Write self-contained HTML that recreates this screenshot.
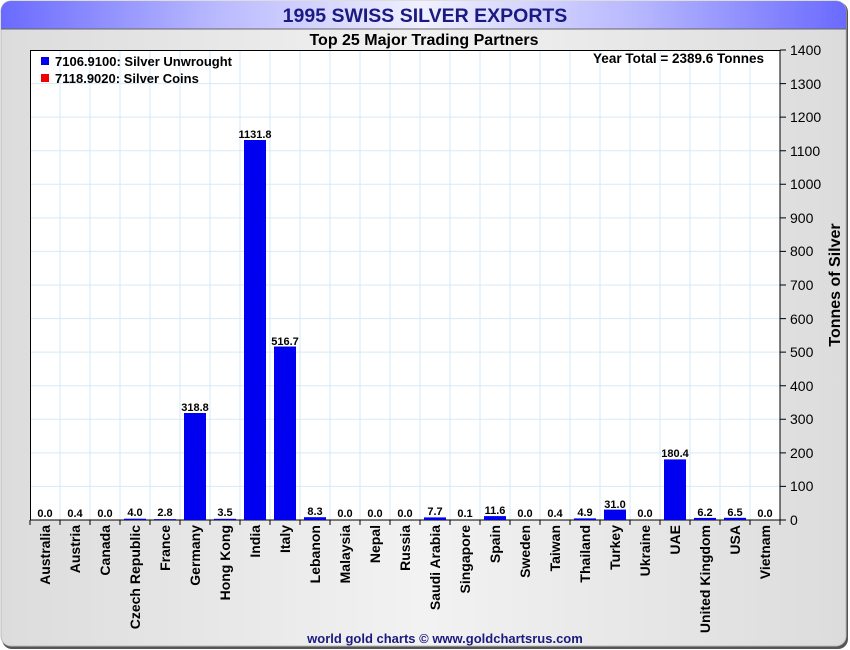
<!DOCTYPE html>
<html><head><meta charset="utf-8"><style>
body{margin:0;width:850px;height:650px;background:#fff;overflow:hidden}
svg{display:block;font-family:"Liberation Sans",Arial,sans-serif}
</style></head><body>
<svg width="850" height="650" viewBox="0 0 850 650" xmlns="http://www.w3.org/2000/svg">
<defs>
<linearGradient id="bg" x1="0" x2="1" y1="0" y2="0"><stop offset="0" stop-color="#dcdcdc"/><stop offset="0.5" stop-color="#f2f2f2"/><stop offset="1" stop-color="#dcdcdc"/></linearGradient>
<linearGradient id="tb" x1="0" x2="1" y1="0" y2="0"><stop offset="0" stop-color="#6a6aff"/><stop offset="0.25" stop-color="#b8b8ff"/><stop offset="0.5" stop-color="#f0f0ff"/><stop offset="0.75" stop-color="#b8b8ff"/><stop offset="1" stop-color="#6a6aff"/></linearGradient>
</defs>
<rect x="2" y="2" width="846" height="647" rx="10" fill="#555"/>
<rect x="1" y="1" width="845" height="645" rx="10" fill="url(#bg)" stroke="#bbb"/>
<path d="M1 29 V11 A10 10 0 0 1 11 1 H836 A10 10 0 0 1 846 11 V29 Z" fill="url(#tb)"/>
<line x1="1" y1="29" x2="846" y2="29" stroke="#666"/>
<text x="425" y="22" text-anchor="middle" font-size="19.5" font-weight="bold" fill="#1a1a80">1995 SWISS SILVER EXPORTS</text>
<text x="424" y="45" text-anchor="middle" font-size="16" font-weight="bold" fill="#000">Top 25 Major Trading Partners</text>
<rect x="30" y="50" width="750" height="470" fill="#fff"/>
<g stroke="#d6eaf8" stroke-width="1">
<path d="M60 50V520M90 50V520M120 50V520M150 50V520M180 50V520M210 50V520M240 50V520M270 50V520M300 50V520M330 50V520M360 50V520M390 50V520M420 50V520M450 50V520M480 50V520M510 50V520M540 50V520M570 50V520M600 50V520M630 50V520M660 50V520M690 50V520M720 50V520M750 50V520"/>
<path d="M30 486.4H780M30 452.9H780M30 419.3H780M30 385.7H780M30 352.1H780M30 318.6H780M30 285H780M30 251.4H780M30 217.9H780M30 184.3H780M30 150.7H780M30 117.1H780M30 83.6H780"/>
</g>
<rect x="30.5" y="50.5" width="749.5" height="469.5" fill="none" stroke="#000"/>
<g stroke="#000"><path d="M30 520V525M60 520V525M90 520V525M120 520V525M150 520V525M180 520V525M210 520V525M240 520V525M270 520V525M300 520V525M330 520V525M360 520V525M390 520V525M420 520V525M450 520V525M480 520V525M510 520V525M540 520V525M570 520V525M600 520V525M630 520V525M660 520V525M690 520V525M720 520V525M750 520V525M780 520V525"/>
<path d="M780 520H786M780 486.4H786M780 452.9H786M780 419.3H786M780 385.7H786M780 352.1H786M780 318.6H786M780 285H786M780 251.4H786M780 217.9H786M780 184.3H786M780 150.7H786M780 117.1H786M780 83.6H786M780 50H786"/></g>
<g font-size="14" fill="#000">
<text x="790" y="525">0</text><text x="790" y="491">100</text><text x="790" y="458">200</text><text x="790" y="424">300</text><text x="790" y="391">400</text><text x="790" y="357">500</text><text x="790" y="324">600</text><text x="790" y="290">700</text><text x="790" y="256">800</text><text x="790" y="223">900</text><text x="790" y="189">1000</text><text x="790" y="156">1100</text><text x="790" y="122">1200</text><text x="790" y="89">1300</text><text x="790" y="55">1400</text>
</g>
<text transform="translate(840,285) rotate(-90)" text-anchor="middle" font-size="16" font-weight="bold">Tonnes of Silver</text>
<g fill="#0000f0">
<rect x="124" y="518.7" width="22" height="1.3"/><rect x="154" y="519.1" width="22" height="0.9"/>
<rect x="184" y="413" width="22" height="107"/><rect x="214" y="518.8" width="22" height="1.2"/>
<rect x="244" y="140" width="22" height="380"/><rect x="274" y="346.5" width="22" height="173.5"/>
<rect x="304" y="517.2" width="22" height="2.8"/><rect x="424" y="517.4" width="22" height="2.6"/>
<rect x="484" y="516.1" width="22" height="3.9"/><rect x="574" y="518.4" width="22" height="1.6"/>
<rect x="604" y="509.6" width="22" height="10.4"/><rect x="664" y="459.4" width="22" height="60.6"/>
<rect x="694" y="517.9" width="22" height="2.1"/><rect x="724" y="517.8" width="22" height="2.2"/>
</g>
<g font-size="11" font-weight="bold" text-anchor="middle" fill="#000">
<text x="45" y="517">0.0</text><text x="75" y="517">0.4</text><text x="105" y="517">0.0</text><text x="135" y="516">4.0</text><text x="165" y="516">2.8</text><text x="195" y="411">318.8</text><text x="225" y="516">3.5</text><text x="255" y="138">1131.8</text><text x="285" y="345">516.7</text><text x="315" y="515">8.3</text><text x="345" y="517">0.0</text><text x="375" y="517">0.0</text><text x="405" y="517">0.0</text><text x="435" y="515">7.7</text><text x="465" y="517">0.1</text><text x="495" y="514">11.6</text><text x="525" y="517">0.0</text><text x="555" y="517">0.4</text><text x="585" y="516">4.9</text><text x="615" y="508">31.0</text><text x="645" y="517">0.0</text><text x="675" y="457">180.4</text><text x="705" y="516">6.2</text><text x="735" y="516">6.5</text><text x="765" y="517">0.0</text>
</g>
<g font-size="14" font-weight="bold" text-anchor="end" fill="#000">
<text transform="translate(50,525) rotate(-90)">Australia</text><text transform="translate(80,525) rotate(-90)">Austria</text><text transform="translate(110,525) rotate(-90)">Canada</text><text transform="translate(140,525) rotate(-90)">Czech Republic</text><text transform="translate(170,525) rotate(-90)">France</text><text transform="translate(200,525) rotate(-90)">Germany</text><text transform="translate(230,525) rotate(-90)">Hong Kong</text><text transform="translate(260,525) rotate(-90)">India</text><text transform="translate(290,525) rotate(-90)">Italy</text><text transform="translate(320,525) rotate(-90)">Lebanon</text><text transform="translate(350,525) rotate(-90)">Malaysia</text><text transform="translate(380,525) rotate(-90)">Nepal</text><text transform="translate(410,525) rotate(-90)">Russia</text><text transform="translate(440,525) rotate(-90)">Saudi Arabia</text><text transform="translate(470,525) rotate(-90)">Singapore</text><text transform="translate(500,525) rotate(-90)">Spain</text><text transform="translate(530,525) rotate(-90)">Sweden</text><text transform="translate(560,525) rotate(-90)">Taiwan</text><text transform="translate(590,525) rotate(-90)">Thailand</text><text transform="translate(620,525) rotate(-90)">Turkey</text><text transform="translate(650,525) rotate(-90)">Ukraine</text><text transform="translate(680,525) rotate(-90)">UAE</text><text transform="translate(710,525) rotate(-90)">United Kingdom</text><text transform="translate(740,525) rotate(-90)">USA</text><text transform="translate(770,525) rotate(-90)">Vietnam</text>
</g>
<rect x="41" y="57" width="8" height="8" fill="#0000f0"/>
<rect x="41" y="74" width="8" height="8" fill="#f00000"/>
<g font-size="13" font-weight="bold" fill="#000">
<text x="55" y="66">7106.9100: Silver Unwrought</text>
<text x="55" y="83">7118.9020: Silver Coins</text>
<text x="764" y="63" text-anchor="end" font-size="13.5">Year Total = 2389.6 Tonnes</text>
</g>
<text x="445" y="643" text-anchor="middle" font-size="13" font-weight="bold" fill="#1a1a80">world gold charts © www.goldchartsrus.com</text>
</svg>
</body></html>
